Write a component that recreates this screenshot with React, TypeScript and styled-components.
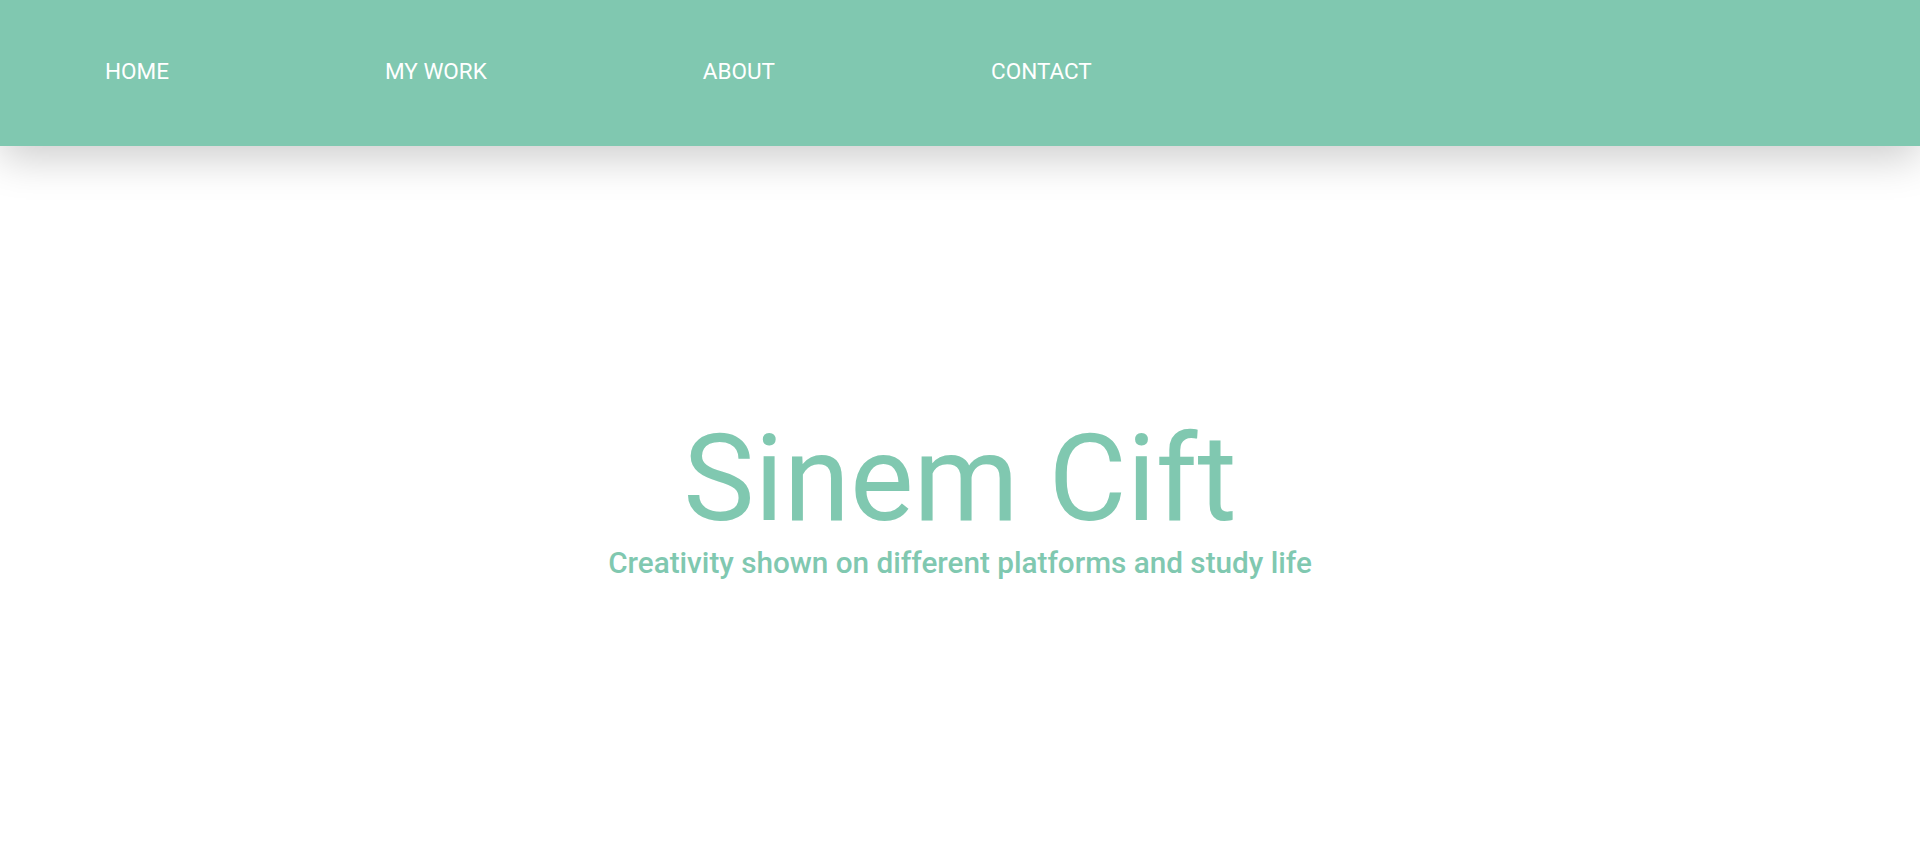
import React from "react";
import styled, { createGlobalStyle } from "styled-components";

const Global = createGlobalStyle`
  html, body { margin: 0; padding: 0; background: #ffffff; }
  body { font-family: Roboto, "Noto Sans", Arial, sans-serif; }
  #root { min-height: 100vh; }
`;

const Page = styled.div`
  display: flex;
  flex-direction: column;
  min-height: 100vh;
`;

const NavBar = styled.nav`
  box-sizing: border-box;
  height: 146px;
  background: #80c8b0;
  box-shadow: 0 12px 40px rgba(0, 0, 0, 0.2);
  display: flex;
  align-items: center;
  padding: 0 0 4px 105px;
  gap: 216px;
  position: relative;
  z-index: 1;
`;

const NavLink = styled.a`
  color: #ffffff;
  font-family: Roboto, Arial, sans-serif;
  font-size: 22.5px;
  font-weight: 400;
  text-decoration: none;
  text-transform: uppercase;
  line-height: 1;
  cursor: pointer;
`;

const Hero = styled.main`
  flex: 1;
  display: flex;
  flex-direction: column;
  align-items: center;
  justify-content: center;
  padding-bottom: 7px;
  color: #80c8b0;
  text-align: center;
`;

const Title = styled.h1`
  margin: 0;
  font-family: Roboto, Arial, sans-serif;
  font-weight: 400;
  font-size: 120px;
  line-height: 1;
`;

const Subtitle = styled.p`
  margin: 5px 0 0;
  font-family: Roboto, Arial, sans-serif;
  font-weight: 500;
  font-size: 29.7px;
  line-height: 1.3;
`;

const links = ["Home", "My Work", "About", "Contact"];

export default function App() {
  return (
    <Page>
      <Global />
      <NavBar>
        {links.map((l) => (
          <NavLink key={l}>{l}</NavLink>
        ))}
      </NavBar>
      <Hero>
        <Title>Sinem Cift</Title>
        <Subtitle>Creativity shown on different platforms and study life</Subtitle>
      </Hero>
    </Page>
  );
}
